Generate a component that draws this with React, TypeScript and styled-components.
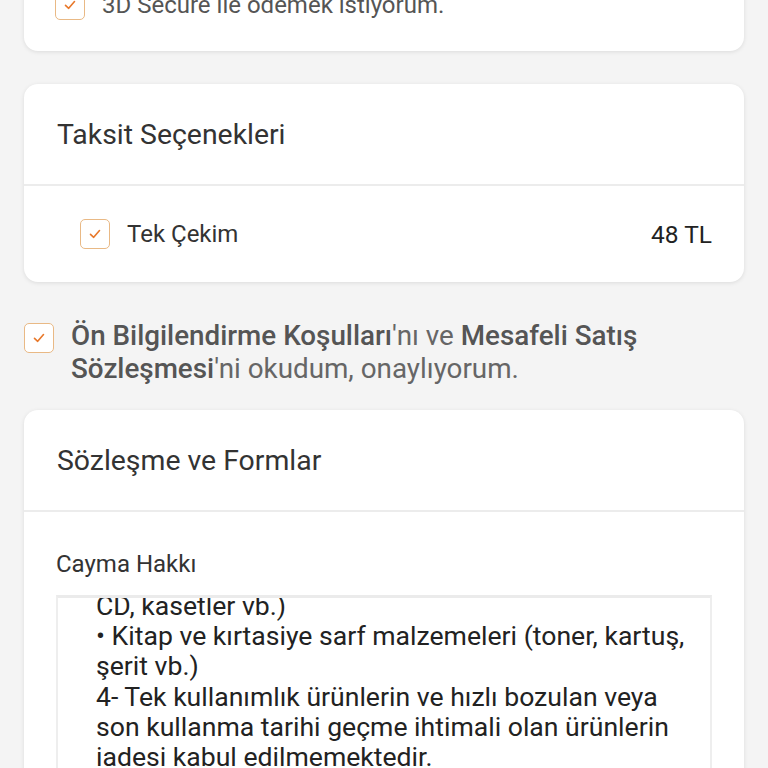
import React from "react";
import styled, { createGlobalStyle } from "styled-components";

const Global = createGlobalStyle`
  html, body { margin: 0; padding: 0; background: #f4f4f4; }
  body { font-family: Roboto, "Noto Sans", sans-serif; -webkit-font-smoothing: antialiased; }
  * { box-sizing: border-box; }
`;

const Page = styled.div`
  display: flex;
  flex-direction: column;
  gap: 33px;
  padding: 0 24px;
  height: 768px;
  overflow: hidden;
`;

const Card = styled.section<{ $cutTop?: boolean }>`
  background: #fff;
  border-radius: 14px;
  box-shadow: 0 1px 4px rgba(0, 0, 0, 0.1);
  flex-shrink: 0;
  ${(p) => (p.$cutTop ? "margin-top: -28px;" : "")}
`;

const CardHeader = styled.div`
  height: 102px;
  display: flex;
  align-items: center;
  padding: 0 33px;
  border-bottom: 2px solid #ececec;
  font-size: 28.4px;
  color: #333;
`;

const CheckRow = styled.label<{ $pad: string }>`
  display: flex;
  align-items: center;
  gap: 17px;
  padding: ${(p) => p.$pad};
  font-size: 24px;
`;

const Box = styled.span`
  flex-shrink: 0;
  width: 30px;
  height: 30px;
  border: 1.5px solid #e9b985;
  border-radius: 5px;
  display: flex;
  align-items: center;
  justify-content: center;
  background: #fff;
`;

const Check = () => (
  <Box>
    <svg width="16" height="16" viewBox="0 0 16 16" fill="none">
      <path d="M3.5 8.3 L6.7 11.3 L12.5 4.5" stroke="#e8782a" strokeWidth="1.6" strokeLinecap="round" strokeLinejoin="round" />
    </svg>
  </Box>
);

const Label = styled.span<{ $color: string }>`
  color: ${(p) => p.$color};
  flex: 1;
`;

const Price = styled.span`
  color: #222;
  font-size: 24.5px;
  font-weight: 400;
`;

const Agreement = styled.div`
  display: flex;
  align-items: flex-start;
  gap: 17px;
  margin: 4px 0 -8px;
`;

const AgreeBox = styled.div`
  padding-top: 4px;
`;

const AgreeText = styled.p`
  margin: 0;
  font-size: 27.8px;
  line-height: 33px;
  color: #666;
`;

const Strong = styled.span`
  color: #555;
  font-weight: 500;
`;

const CardBody = styled.div`
  padding: 38px 32px 0 32px;
`;

const SubTitle = styled.div`
  font-size: 24px;
  line-height: 28px;
  color: #333;
  margin-bottom: 17px;
`;

const TextWindow = styled.div`
  height: 200px;
  overflow: hidden;
  border-top: 3px solid #ebebeb;
  border-left: 2px solid #eeeeee;
  border-right: 2px solid #eeeeee;
  padding: 0 20px 0 38px;
`;

const TextContent = styled.p`
  margin: -7px 0 0 0;
  font-size: 26.6px;
  line-height: 30.2px;
  color: #222;
`;

export default function App() {
  return (
    <>
      <Global />
      <Page>
        <Card $cutTop>
          <CheckRow $pad="18px 31px 31px">
            <Check />
            <Label $color="#555">3D Secure ile ödemek istiyorum.</Label>
          </CheckRow>
        </Card>

        <Card>
          <CardHeader>Taksit Seçenekleri</CardHeader>
          <CheckRow $pad="33px 32px 33px 56px">
            <Check />
            <Label $color="#333">Tek Çekim</Label>
            <Price>48 TL</Price>
          </CheckRow>
        </Card>

        <Agreement>
          <AgreeBox>
            <Check />
          </AgreeBox>
          <AgreeText>
            <Strong>Ön Bilgilendirme Koşulları</Strong>'nı ve <Strong>Mesafeli Satış Sözleşmesi</Strong>'ni okudum, onaylıyorum.
          </AgreeText>
        </Agreement>

        <Card>
          <CardHeader>Sözleşme ve Formlar</CardHeader>
          <CardBody>
            <SubTitle>Cayma Hakkı</SubTitle>
            <TextWindow>
              <TextContent>
                CD, kasetler vb.)
                <br />• Kitap ve kırtasiye sarf malzemeleri (toner, kartuş, şerit vb.)
                <br />4- Tek kullanımlık ürünlerin ve hızlı bozulan veya son kullanma tarihi geçme ihtimali olan ürünlerin iadesi kabul edilmemektedir.
              </TextContent>
            </TextWindow>
          </CardBody>
        </Card>
      </Page>
    </>
  );
}
